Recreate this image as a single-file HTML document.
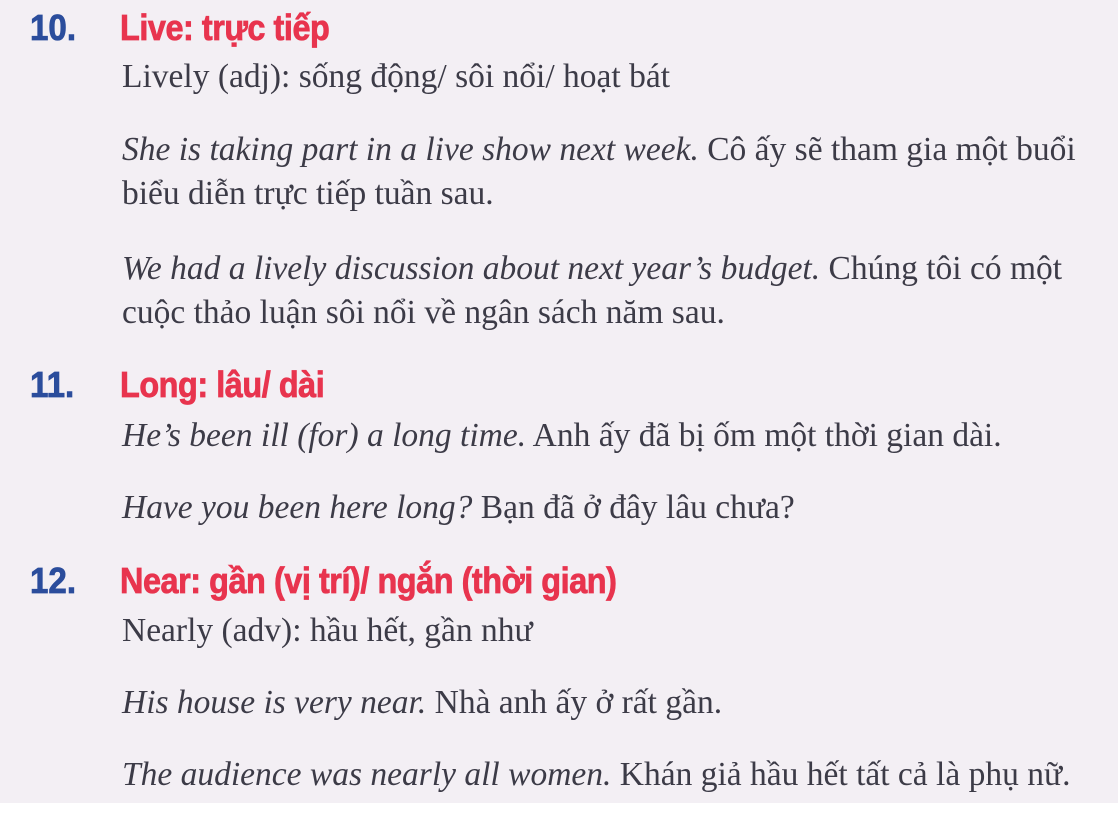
<!DOCTYPE html>
<html><head><meta charset="utf-8"><style>
html,body{margin:0;padding:0}
body{width:1118px;height:822px;background:#fff;position:relative;overflow:hidden}
.bg{position:absolute;left:0;top:0;width:1118px;height:803px;background:#f3eff4}
.t{position:absolute;left:122px;font-family:"Liberation Serif",serif;font-size:33.5px;line-height:40px;color:#3c3b47;white-space:nowrap}
.t i{font-style:italic}
.h{position:absolute;left:120px;font-family:"Liberation Sans",sans-serif;font-weight:bold;font-size:36px;line-height:40px;color:#e8344e;transform:scaleX(0.9);transform-origin:left;white-space:nowrap;letter-spacing:-0.5px;-webkit-text-stroke:0.8px #e8344e}
.n{position:absolute;left:30px;font-family:"Liberation Sans",sans-serif;font-weight:bold;font-size:36px;line-height:40px;color:#2b4d9c;transform:scaleX(0.92);transform-origin:left;-webkit-text-stroke:0.8px #2b4d9c}
</style></head><body>
<div class="bg"></div>
<div class="n" style="top:8px">10.</div><div class="h" style="top:8px">Live: trực tiếp</div>
<div class="t" style="top:57px">Lively (adj): sống động/ sôi nổi/ hoạt bát</div>
<div class="t" style="top:130px"><i>She is taking part in a live show next week.</i> Cô ấy sẽ tham gia một buổi</div>
<div class="t" style="top:174px">biểu diễn trực tiếp tuần sau.</div>
<div class="t" style="top:249px"><i>We had a lively discussion about next year’s budget.</i> Chúng tôi có một</div>
<div class="t" style="top:293px">cuộc thảo luận sôi nổi về ngân sách năm sau.</div>
<div class="n" style="top:365px">11.</div><div class="h" style="top:365px">Long: lâu/ dài</div>
<div class="t" style="top:416px"><i>He’s been ill (for) a long time.</i> Anh ấy đã bị ốm một thời gian dài.</div>
<div class="t" style="top:488px"><i>Have you been here long?</i> Bạn đã ở đây lâu chưa?</div>
<div class="n" style="top:561px">12.</div><div class="h" style="top:561px">Near: gần (vị trí)/ ngắn (thời gian)</div>
<div class="t" style="top:611px">Nearly (adv): hầu hết, gần như</div>
<div class="t" style="top:683px"><i>His house is very near.</i> Nhà anh ấy ở rất gần.</div>
<div class="t" style="top:755px"><i>The audience was nearly all women.</i> Khán giả hầu hết tất cả là phụ nữ.</div>
</body></html>
